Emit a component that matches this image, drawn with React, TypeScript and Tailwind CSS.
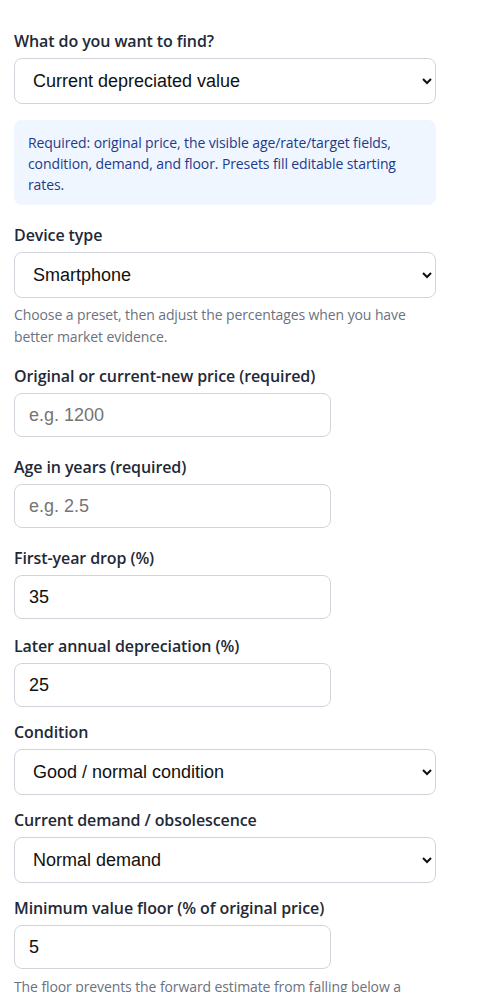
const labelCls =
  "block text-[16px] leading-[24px] font-semibold text-[#1f2937] mb-[5px] tracking-[-0.1px]";
const selectCls =
  "block w-full h-[46px] pl-[14px] pr-[8px] text-[18px] text-[#111111] bg-white border border-[#d1d5db] rounded-[8px]";
const inputCls =
  "block w-3/4 h-[44px] px-[14px] text-[18px] text-[#111111] bg-white border border-[#d1d5db] rounded-[8px] placeholder:text-[#757575]";
const hintCls = "text-[14px] leading-[22px] text-[#6b7280] tracking-[-0.1px]";

const ctrlFont = { fontFamily: '"Liberation Sans", Arial, sans-serif' };

function SelectField({
  label,
  value,
  options,
  className = "",
}: {
  label: string;
  value: string;
  options: string[];
  className?: string;
}) {
  return (
    <div className={className}>
      <label className={labelCls}>{label}</label>
      <select className={selectCls} style={ctrlFont} defaultValue={value}>
        {options.map((o) => (
          <option key={o}>{o}</option>
        ))}
      </select>
    </div>
  );
}

function NumberField({
  label,
  value,
  placeholder,
  className = "",
}: {
  label: string;
  value?: string;
  placeholder?: string;
  className?: string;
}) {
  return (
    <div className={className}>
      <label className={labelCls}>{label}</label>
      <input
        type="text"
        inputMode="decimal"
        className={inputCls}
        style={ctrlFont}
        defaultValue={value}
        placeholder={placeholder}
      />
    </div>
  );
}

export default function App() {
  return (
    <div
      className="min-h-screen bg-white"
      style={{ fontFamily: '"Open Sans", "Noto Sans", sans-serif' }}
    >
      <form className="w-[422px] ml-[14px] pt-[29px]" onSubmit={(e) => e.preventDefault()}>
        <SelectField
          label="What do you want to find?"
          value="Current depreciated value"
          options={[
            "Current depreciated value",
            "Future value at a given age",
            "Age when value reaches a target",
          ]}
        />

        <div className="mt-[16px] bg-[#eff6ff] rounded-[8px] px-[14px] pt-[12px] pb-[10px] text-[14px] leading-[21px] text-[#1e3a8a] tracking-[-0.1px]">
          Required: original price, the visible age/rate/target fields, condition, demand, and
          floor. Presets fill editable starting rates.
        </div>

        <SelectField
          className="mt-[18px]"
          label="Device type"
          value="Smartphone"
          options={["Smartphone", "Laptop", "Tablet", "Desktop PC", "Smartwatch", "Game console"]}
        />
        <p className={`${hintCls} mt-[6px]`}>
          Choose a preset, then adjust the percentages when you have better market evidence.
        </p>

        <NumberField
          className="mt-[16px]"
          label="Original or current-new price (required)"
          placeholder="e.g. 1200"
        />
        <NumberField className="mt-[18px]" label="Age in years (required)" placeholder="e.g. 2.5" />
        <NumberField className="mt-[18px]" label="First-year drop (%)" value="35" />
        <NumberField className="mt-[15px]" label="Later annual depreciation (%)" value="25" />

        <SelectField
          className="mt-[13px]"
          label="Condition"
          value="Good / normal condition"
          options={[
            "Like new / excellent",
            "Good / normal condition",
            "Fair / visible wear",
            "Poor / needs repair",
          ]}
        />
        <SelectField
          className="mt-[13px]"
          label="Current demand / obsolescence"
          value="Normal demand"
          options={["High demand", "Normal demand", "Low demand / outdated"]}
        />

        <NumberField
          className="mt-[13px]"
          label="Minimum value floor (% of original price)"
          value="5"
        />
        <p className={`${hintCls} mt-[7px]`}>
          The floor prevents the forward estimate from falling below a realistic resale or parts
          value.
        </p>
      </form>
    </div>
  );
}
